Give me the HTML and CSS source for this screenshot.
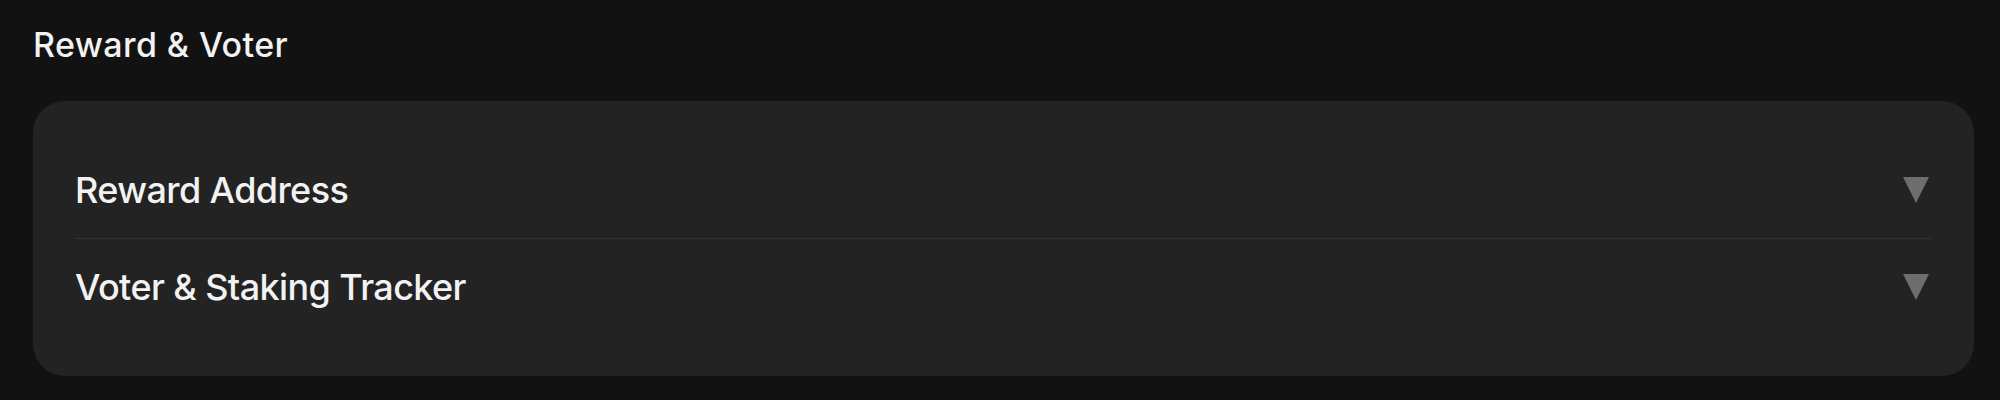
FILE: index.html
```
<!DOCTYPE html>
<html lang="en">
<head>
    <meta charset="UTF-8">
    <title>Reward &amp; Voter</title>
    <link rel="stylesheet" href="styles.css">
</head>
<body>

    <!-- Section heading -->
    <h2 class="section-title">Reward &amp; Voter</h2>

    <!-- Collapsible rows -->
    <div class="panel">
        <div class="panel-row">
            <span class="row-label">Reward Address</span>
            <span class="row-caret"></span>
        </div>
        <div class="panel-row">
            <span class="row-label">Voter &amp; Staking Tracker</span>
            <span class="row-caret"></span>
        </div>
    </div>

</body>
</html>
```

FILE: styles.css
```
body {
    margin: 0;
    padding: 0 26px 0 33px;
    background-color: #121212;
    font-family: Inter, 'Noto Sans', sans-serif;
    color: #f2f2f2;
}
.section-title {
    margin: 0;
    padding-top: 25px;
    height: 101px;
    box-sizing: border-box;
    font-size: 34px;
    font-weight: 500;
    line-height: 40px;
    letter-spacing: 0.4px;
}
.panel {
    background-color: #232323;
    border-radius: 32px;
    padding: 41px 42px 41px;
}
.panel-row {
    display: flex;
    align-items: center;
    justify-content: space-between;
    height: 96px;
}
.panel-row + .panel-row {
    border-top: 1px solid #333333;
}
.row-label {
    font-size: 36px;
    font-weight: 500;
    letter-spacing: -0.6px;
}
.row-caret {
    width: 0;
    height: 0;
    border-left: 13px solid transparent;
    border-right: 13px solid transparent;
    border-top: 26px solid #6e6e6e;
    margin-right: 3px;
}
```
